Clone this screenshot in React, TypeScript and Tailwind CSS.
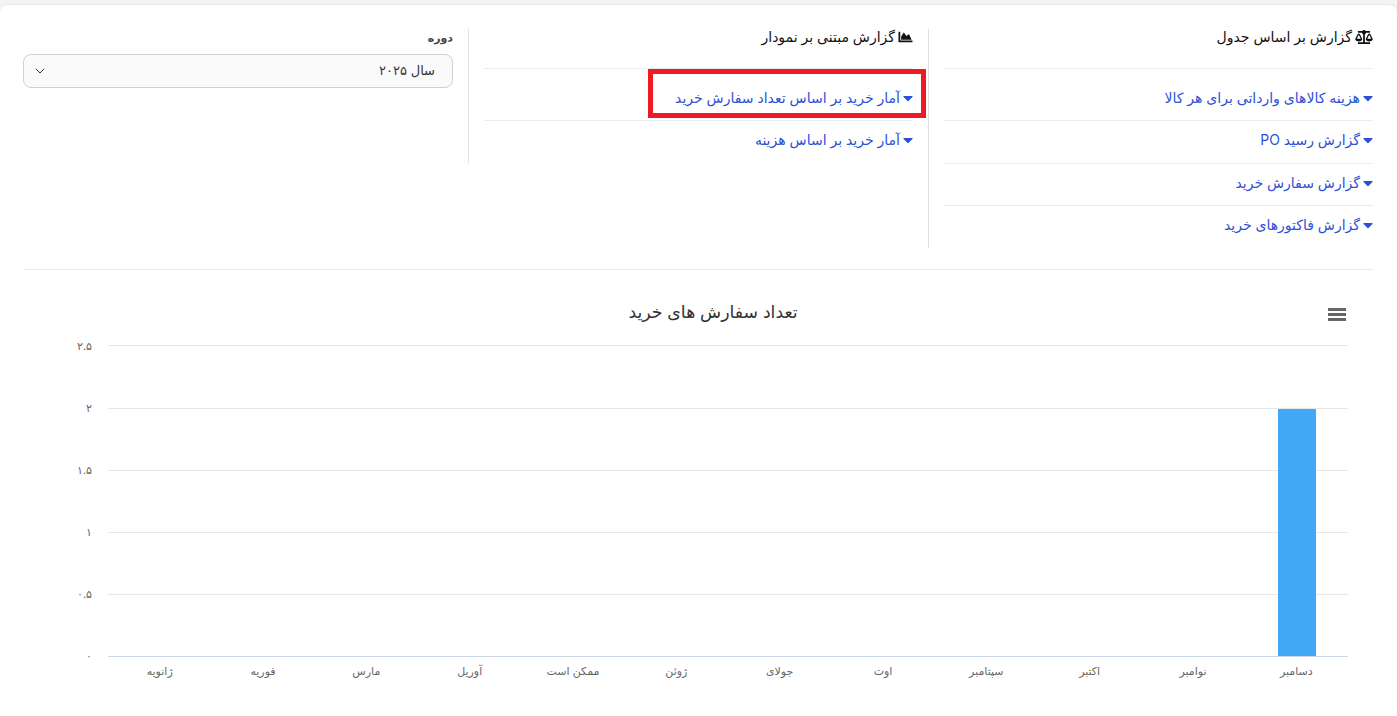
import { FaBalanceScale, FaCaretDown, FaChartArea } from 'react-icons/fa'
import { ChevronDown } from 'lucide-react'

const TABLE_REPORTS = ['هزینه کالاهای وارداتی برای هر کالا', 'گزارش رسید PO', 'گزارش سفارش خرید', 'گزارش فاکتورهای خرید']
const CHART_REPORTS = ['آمار خرید بر اساس تعداد سفارش خرید', 'آمار خرید بر اساس هزینه']
const MONTHS = ['دسامبر', 'نوامبر', 'اکتبر', 'سپتامبر', 'اوت', 'جولای', 'ژوئن', 'ممکن است', 'آوریل', 'مارس', 'فوریه', 'ژانویه']
const TICKS = [
  ['۲.۵', 345, 350],
  ['۲', 408, 412],
  ['۱.۵', 470, 474],
  ['۱', 532, 536],
  ['۰.۵', 594, 598],
] as const

function ReportLink({ label, first }: { label: string; first?: boolean }) {
  return (
    <a className={`flex items-center gap-[3px] text-sm text-[#2b50d8] ${first ? 'h-[51px] pt-[7px]' : 'h-[42.5px] pb-[3px] border-t border-[#e9ecef]'}`}>
      <FaCaretDown className="w-[10px] h-[16px] text-[#2b50d8]" />
      <span>{label}</span>
    </a>
  )
}

function ReportColumn({
  title,
  icon,
  items,
}: {
  title: string
  icon: React.ReactNode
  items: string[]
}) {
  return (
    <div className="w-[460px] px-[15px] border-l border-[#dee2e6]">
      <div className="h-[40px] border-b border-[#e9ecef] text-sm text-[#111]">
        <div className="flex items-center gap-[3px] h-[16px]">
          {icon}
          <span>{title}</span>
        </div>
      </div>
      {items.map((item, i) => (
        <ReportLink key={item} label={item} first={i === 0} />
      ))}
    </div>
  )
}

function PurchaseChart() {
  const slot = 1240 / 12
  return (
    <svg width="1350" height="430" viewBox="23 270 1350 430" className="block" direction="rtl">
      <text x="713" y="318" textAnchor="middle" fontSize="17.300" fill="#333">
        تعداد سفارش های خرید
      </text>
      <path d="M1328 309.500h18M1328 314.500h18M1328 319.500h18" stroke="#666" strokeWidth="3" />
      {TICKS.map(([label, y, textY]) => (
        <g key={label}>
          <line x1="108" x2="1348" y1={y + 0.5} y2={y + 0.5} stroke="#e6e6e6" />
          <text x="92" y={textY} textAnchor="start" fontSize="11" fill="#666">
            {label}
          </text>
        </g>
      ))}
      <text x="92" y="660" textAnchor="start" fontSize="11" fill="#666">
        ۰
      </text>
      <rect x="1278" y="409" width="38" height="247" fill="#42a8f5" />
      <line x1="108" x2="1348" y1="656.500" y2="656.500" stroke="#ccd6eb" />
      {MONTHS.map((month, i) => (
        <text key={month} x={1348 - slot * (i + 0.5)} y="675" textAnchor="middle" fontSize="11" fill="#666">
          {month}
        </text>
      ))}
    </svg>
  )
}

export default function App() {
  return (
    <div
      dir="rtl"
      className="h-[716px] overflow-hidden bg-[#f3f3f3] pt-[4px]"
      style={{ fontFamily: 'Inter, "DejaVu Sans", sans-serif' }}
    >
      <div className="relative h-full bg-white rounded-t-lg border-t border-[#e5e7eb] pr-[9px] pl-[8px] pt-[24px]">
        <div className="flex items-start">
          <ReportColumn
            title="گزارش بر اساس جدول"
            icon={<FaBalanceScale className="w-[18px] h-[14px] text-[#111]" />}
            items={TABLE_REPORTS}
          />
          <ReportColumn
            title="گزارش مبتنی بر نمودار"
            icon={<FaChartArea className="w-[15px] h-[14px] text-[#111]" />}
            items={CHART_REPORTS}
          />
          <div className="w-[460px] px-[15px]">
            <div className="text-[11px] font-bold text-[#444] h-[25px] pt-[1px]">دوره</div>
            <button className="flex items-center justify-between w-full h-[34px] rounded-lg border border-[#cfd1d6] bg-[#fafafa] pr-[17px] pl-[8px] text-[13px] text-[#333]">
              <span>سال ۲۰۲۵</span>
              <ChevronDown strokeWidth={1.5} className="w-[16px] h-[16px] text-[#333]" />
            </button>
          </div>
        </div>
        <div className="mx-[15px] mt-[21.5px] border-t border-[#e9ecef]">
          <PurchaseChart />
        </div>
        {/* red annotation box from the screenshot */}
        <div className="absolute left-[648px] top-[64px] w-[278px] h-[49px] border-[5px] border-[#ed1c24]" />
      </div>
    </div>
  )
}
